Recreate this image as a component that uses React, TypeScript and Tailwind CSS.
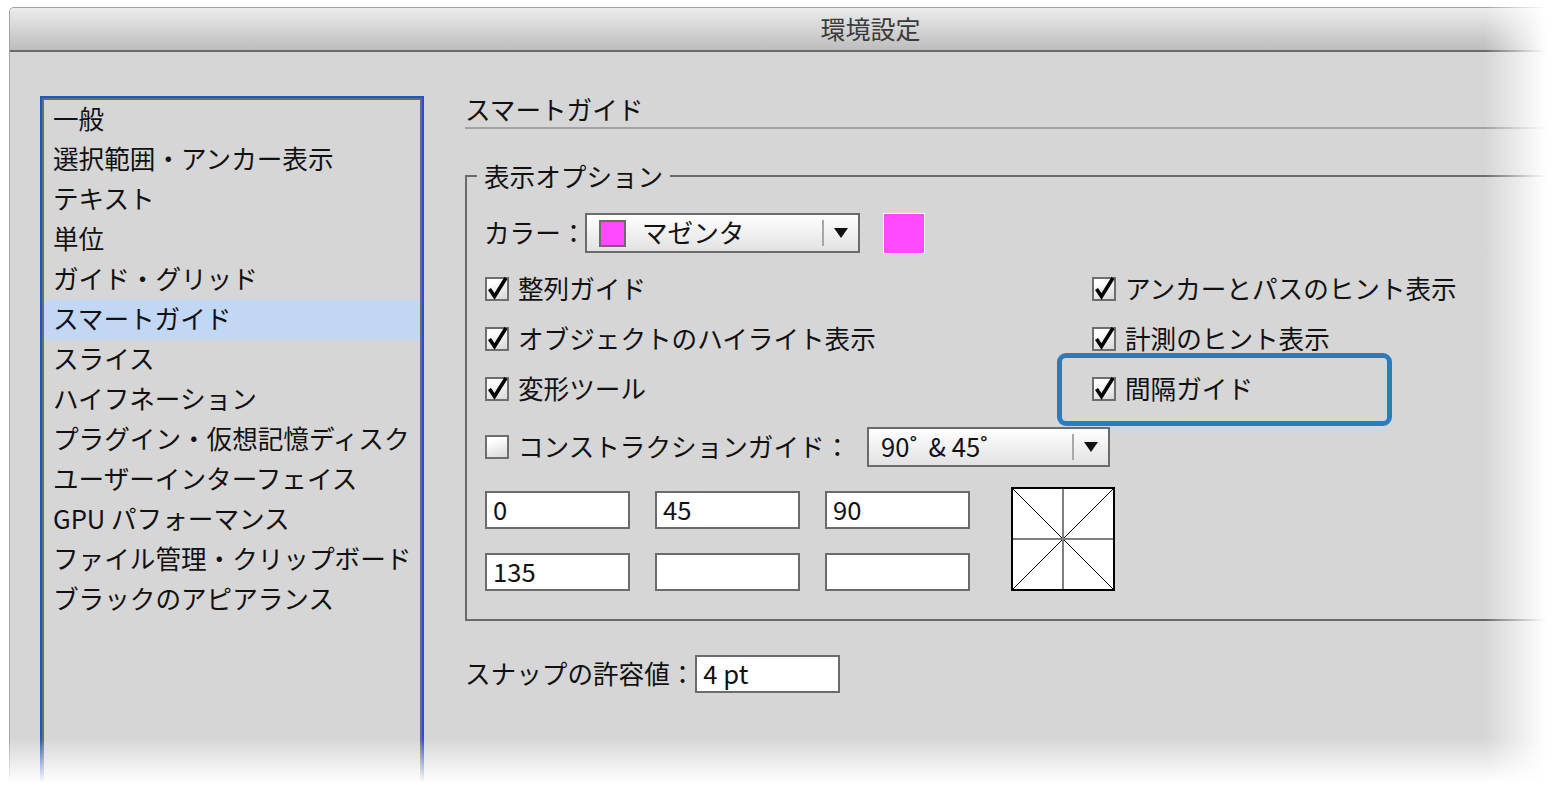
import React from "react";

function Check({ checked }: { checked: boolean }) {
  return (
    <span className="relative block h-[24px] w-[24px] shrink-0 border-2 border-[#6e6e6e] bg-[linear-gradient(160deg,#ffffff_20%,#d8d8d8)]">
      {checked && (
        <svg
          className="absolute left-[-2px] top-[-2px] overflow-visible"
          width="24"
          height="24"
          viewBox="0 0 24 24"
        >
          <path d="M4.5 12 L9.5 19.5 L21 1" stroke="#000" strokeWidth="3.6" fill="none" strokeLinejoin="miter" />
        </svg>
      )}
    </span>
  );
}

function CheckRow({ checked, label, children }: { checked: boolean; label: string; children?: React.ReactNode }) {
  return (
    <div className="relative flex h-[50px] items-center">
      <Check checked={checked} />
      <span className="ml-[9px] whitespace-nowrap pb-[2px] text-[25.6px] leading-none text-[#111]">{label}</span>
      {children}
    </div>
  );
}

function Triangle() {
  return (
    <svg width="14" height="10" viewBox="0 0 14 10">
      <polygon points="0,0 14,0 7,10" fill="#111" />
    </svg>
  );
}

function Field({ value }: { value?: string }) {
  return (
    <div className="flex h-[38px] w-[145px] shrink-0 items-center border-2 border-[#6b6b6b] bg-white pb-[2px] pl-[6px] text-[25.6px] leading-none text-[#111]">
      {value}
    </div>
  );
}

const items = [
  "一般",
  "選択範囲・アンカー表示",
  "テキスト",
  "単位",
  "ガイド・グリッド",
  "スマートガイド",
  "スライス",
  "ハイフネーション",
  "プラグイン・仮想記憶ディスク",
  "ユーザーインターフェイス",
  "GPU パフォーマンス",
  "ファイル管理・クリップボード",
  "ブラックのアピアランス",
];

export default function App() {
  return (
    <div className="relative h-[798px] w-[1560px] overflow-hidden bg-white font-['Noto_Sans_CJK_JP','Noto_Sans',sans-serif]">
      <div className="ml-[9px] mt-[7px] flex h-[860px] w-[1722px] flex-col overflow-hidden rounded-tl-[5px] border-l border-t border-[#a3a3a3] bg-[#d6d6d6]">
        {/* title bar */}
        <div className="flex h-[44px] shrink-0 items-center justify-center border-b-2 border-[#6a6a6a] bg-[linear-gradient(to_bottom,#ececec,#bdbdbd)]">
          <span className="pb-[2px] text-[25px] leading-none text-[#3a3a3a]">環境設定</span>
        </div>
        {/* body */}
        <div className="flex flex-1 pl-[30px] pt-[44px]">
          {/* list */}
          <div className="w-[384px] shrink-0 border-2 border-[#1f52d6]">
            <div className="h-full border-2 border-[#6b6b6b]">
              {items.map((it) => (
                <div
                  key={it}
                  className={
                    it === "スマートガイド"
                      ? "h-[40px] whitespace-nowrap bg-[#c1d7f4] pl-[9px] text-[25.6px] leading-[36px] text-[#111]"
                      : "h-[40px] whitespace-nowrap pl-[9px] text-[25.6px] leading-[36px] text-[#111]"
                  }
                >
                  {it}
                </div>
              ))}
            </div>
          </div>
          {/* right pane */}
          <div className="ml-[41px] flex-1 pr-[40px]">
            <div className="h-[33px] border-b-2 border-[#a2a2a2] text-[25.6px] leading-[26px] text-[#111]">
              スマートガイド
            </div>
            <fieldset className="mt-[33px] border-2 border-[#6b6b6b] p-0">
              <legend className="ml-[10px] px-[7px] text-[25.6px] leading-[28px] text-[#111]">表示オプション</legend>
              <div className="pb-[28px] pl-[17px] pt-[23px]">
                {/* color row */}
                <div className="flex h-[40px] items-center">
                  <span className="w-[101px] shrink-0 whitespace-nowrap pb-[2px] text-[25.6px] leading-none text-[#111]">カラー：</span>
                  <div className="flex h-[40px] w-[275px] shrink-0 items-center border-2 border-[#6b6b6b] bg-[linear-gradient(to_bottom,#ffffff,#e2e2e2)]">
                    <span className="ml-[12px] block h-[27px] w-[27px] shrink-0 border-2 border-[#6b6b6b] bg-[#ff4bff]" />
                    <span className="ml-[16px] flex-1 whitespace-nowrap pb-[2px] text-[25.6px] leading-none text-[#111]">マゼンタ</span>
                    <span className="block h-[26px] w-[2px] shrink-0 bg-[#a8a8a8]" />
                    <span className="flex w-[34px] shrink-0 items-center justify-center">
                      <Triangle />
                    </span>
                  </div>
                  <span className="ml-[23px] block h-[41px] w-[42px] shrink-0 border border-white bg-[#ff4bff]" />
                </div>
                {/* checkbox grid */}
                <div className="ml-[1px] mt-[11px] grid grid-cols-[607px_1fr]">
                  <CheckRow checked label="整列ガイド" />
                  <CheckRow checked label="アンカーとパスのヒント表示" />
                  <CheckRow checked label="オブジェクトのハイライト表示" />
                  <CheckRow checked label="計測のヒント表示" />
                  <CheckRow checked label="変形ツール" />
                  <CheckRow checked label="間隔ガイド">
                    <span className="pointer-events-none absolute left-[-35px] top-[-11px] h-[73px] w-[335px] rounded-[9px] border-[5px] border-[#2a7bbf]" />
                  </CheckRow>
                </div>
                {/* construction row */}
                <div className="ml-[1px] mt-[13px] flex h-[40px] items-center">
                  <Check checked={false} />
                  <span className="ml-[9px] w-[349px] shrink-0 whitespace-nowrap pb-[2px] text-[25.6px] leading-none text-[#111]">コンストラクションガイド：</span>
                  <div className="flex h-[40px] w-[243px] shrink-0 items-center border-2 border-[#6b6b6b] bg-[linear-gradient(to_bottom,#ffffff,#e2e2e2)]">
                    <span className="flex-1 whitespace-nowrap pb-[2px] pl-[12px] text-[25.6px] leading-none text-[#111]">90˚&nbsp; &amp; 45˚</span>
                    <span className="block h-[26px] w-[2px] shrink-0 bg-[#a8a8a8]" />
                    <span className="flex w-[34px] shrink-0 items-center justify-center">
                      <Triangle />
                    </span>
                  </div>
                </div>
                {/* angle inputs */}
                <div className="ml-[1px] mt-[20px] flex items-end">
                  <div className="grid grid-cols-[145px_145px_145px] gap-x-[25px] gap-y-[24px]">
                    <Field value="0" />
                    <Field value="45" />
                    <Field value="90" />
                    <Field value="135" />
                    <Field />
                    <Field />
                  </div>
                  <svg className="ml-[41px] block shrink-0" width="104" height="104" viewBox="0 0 104 104">
                    <rect x="1" y="1" width="102" height="102" fill="#fff" stroke="#000" strokeWidth="2" />
                    <line x1="2" y1="2" x2="102" y2="102" stroke="#000" strokeWidth="1" />
                    <line x1="102" y1="2" x2="2" y2="102" stroke="#000" strokeWidth="1" />
                    <line x1="52" y1="2" x2="52" y2="102" stroke="#808080" strokeWidth="2" />
                    <line x1="2" y1="52" x2="102" y2="52" stroke="#808080" strokeWidth="2" />
                  </svg>
                </div>
              </div>
            </fieldset>
            {/* snap row */}
            <div className="mt-[34px] flex h-[38px] items-center">
              <span className="shrink-0 whitespace-nowrap pb-[2px] text-[25.6px] leading-none text-[#111]">スナップの許容値：</span>
              <Field value="4 pt" />
            </div>
          </div>
        </div>
      </div>
      {/* fades */}
      <div className="pointer-events-none absolute right-0 top-0 h-full w-[75px] bg-[linear-gradient(to_right,rgba(255,255,255,0),#ffffff_82%)]" />
      <div className="pointer-events-none absolute bottom-0 left-0 h-[60px] w-full bg-[linear-gradient(to_bottom,rgba(255,255,255,0),#ffffff_75%)]" />
    </div>
  );
}
